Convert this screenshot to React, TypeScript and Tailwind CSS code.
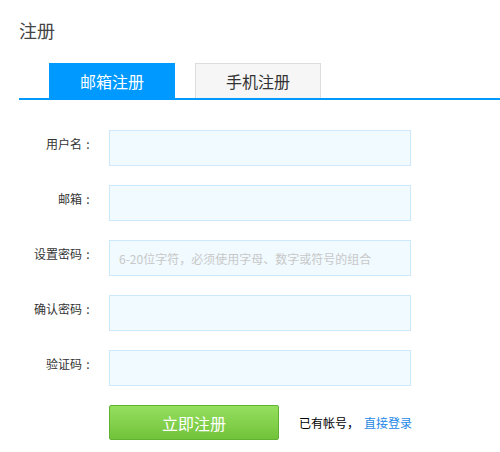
const font = { fontFamily: '"Noto Sans CJK SC", "Microsoft YaHei", sans-serif' };

const fields = [
  { label: "用户名", placeholder: "" },
  { label: "邮箱", placeholder: "" },
  { label: "设置密码", placeholder: "6-20位字符，必须使用字母、数字或符号的组合" },
  { label: "确认密码", placeholder: "" },
  { label: "验证码", placeholder: "" },
];

export default function App() {
  return (
    <div className="h-[452px] w-[500px] overflow-hidden bg-white pl-[19px] text-[#333]" style={font}>
      <h1 className="pt-[18px] text-[18px] leading-[24px] font-normal text-[#444]">注册</h1>

      {/* tabs */}
      <div className="mt-[21px] flex gap-[20px] border-b-2 border-[#0099ff] pl-[30px]">
        <button className="h-[35px] w-[126px] bg-[#0099ff] text-[16px] text-white">邮箱注册</button>
        <button className="h-[35px] w-[126px] border border-b-0 border-[#dcdcdc] bg-[#f6f6f6] text-[16px] text-[#333]">
          手机注册
        </button>
      </div>

      {/* form */}
      <div className="mt-[30px] flex flex-col gap-[19px]">
        {fields.map((f) => (
          <div key={f.label} className="flex items-start">
            <label className="flex w-[75px] justify-end text-[12px] leading-[27px] text-[#333]">
              {f.label}
              <span className="w-[12px] text-center">:</span>
            </label>
            <input
              placeholder={f.placeholder}
              className="ml-[15px] h-[36px] w-[302px] border border-[#cde8fb] bg-[#f0faff] px-[9px] text-[12px] outline-none placeholder:text-[#c8c8c8]"
            />
          </div>
        ))}

        <div className="flex items-center">
          <button className="ml-[90px] h-[35px] w-[170px] rounded-[2px] border border-[#5fb232] bg-gradient-to-b from-[#95e05e] to-[#72c23a] text-[16px] text-white">
            立即注册
          </button>
          <span className="ml-[20px] text-[12px] text-black">已有帐号，</span>
          <a href="#" className="ml-[5px] text-[12px] text-[#1e88e5]">
            直接登录
          </a>
        </div>
      </div>
    </div>
  );
}
